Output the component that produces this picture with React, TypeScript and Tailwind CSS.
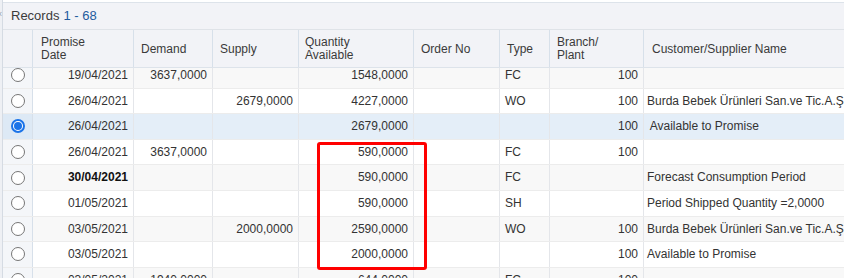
import React from 'react';

type Row = {
  date: string;
  demand?: string;
  supply?: string;
  qty: string;
  type?: string;
  branch?: string;
  name?: string;
  bold?: boolean;
  selected?: boolean;
};

const rows: Row[] = [
  { date: '19/04/2021', demand: '3637,0000', qty: '1548,0000', type: 'FC', branch: '100' },
  { date: '26/04/2021', supply: '2679,0000', qty: '4227,0000', type: 'WO', branch: '100', name: 'Burda Bebek Ürünleri San.ve Tic.A.Ş' },
  { date: '26/04/2021', qty: '2679,0000', branch: '100', name: ' Available to Promise', selected: true },
  { date: '26/04/2021', demand: '3637,0000', qty: '590,0000', type: 'FC', branch: '100' },
  { date: '30/04/2021', qty: '590,0000', type: 'FC', name: 'Forecast Consumption Period', bold: true },
  { date: '01/05/2021', qty: '590,0000', type: 'SH', name: 'Period Shipped Quantity =2,0000' },
  { date: '03/05/2021', supply: '2000,0000', qty: '2590,0000', type: 'WO', branch: '100', name: 'Burda Bebek Ürünleri San.ve Tic.A.Ş' },
  { date: '03/05/2021', qty: '2000,0000', branch: '100', name: 'Available to Promise' },
  { date: '03/05/2021', demand: '1940,0000', qty: '644,0000', type: 'FC', branch: '100' },
];

const cols = 'grid grid-cols-[30px_101px_79px_86px_115px_86px_50px_94px_1fr]';
const cell = 'border-r border-[#e4e6ea] px-[5px] overflow-hidden whitespace-nowrap';

const Radio = ({ on }: { on?: boolean }) =>
  on ? (
    <span className="w-[14px] h-[14px] rounded-full border-2 border-[#1a73e8] flex items-center justify-center bg-white">
      <span className="w-[8px] h-[8px] rounded-full bg-[#1a73e8]" />
    </span>
  ) : (
    <span className="w-[14px] h-[14px] rounded-full border border-[#767676] bg-white" />
  );

export default function App() {
  return (
    <div
      className="w-[844px] h-[278px] overflow-hidden bg-white flex text-[12px] text-[#333]"
      style={{ fontFamily: '"Liberation Sans", Arial, sans-serif' }}
    >
      <div className="w-[3px] border-r border-[#d5dbe3] bg-[#eef0f4] pt-[10px]">
        <span className="block text-[9px] leading-none text-[#9aa3ad] -ml-[3px]">×</span>
      </div>
      <div className="flex-1 relative border-t border-[#dde3ea] mt-[2px]">
        <div className="h-[27px] bg-[#f2f3f7] border-b border-[#dfe3e8] flex items-center pl-[8px] text-[13px]">
          <span className="text-[#3b3b3b]">Records</span>
          <span className="ml-[4px] text-[#1f5c9e]">1 - 68</span>
        </div>
        <div className={`${cols} h-[38px] bg-[#f2f3f7] border-b border-[#dde3ea] items-stretch text-[#3a3a3a]`}>
          <div className="border-r border-[#d7e0ea]" />
          <div className="border-r border-[#d7e0ea] px-[8px] flex items-center leading-[13px]">Promise<br />Date</div>
          <div className="border-r border-[#d7e0ea] px-[7px] flex items-center">Demand</div>
          <div className="border-r border-[#d7e0ea] px-[7px] flex items-center">Supply</div>
          <div className="border-r border-[#d7e0ea] px-[6px] flex items-center leading-[13px]">Quantity<br />Available</div>
          <div className="border-r border-[#d7e0ea] px-[7px] flex items-center">Order No</div>
          <div className="border-r border-[#d7e0ea] px-[7px] flex items-center">Type</div>
          <div className="border-r border-[#d7e0ea] px-[7px] flex items-center leading-[13px]">Branch/<br />Plant</div>
          <div className="px-[8px] flex items-center">Customer/Supplier Name</div>
        </div>
        <div className="h-[210px] overflow-hidden relative">
          <div className="-mt-[5px]">
            {rows.map((r, i) => (
              <div
                key={i}
                className={`${cols} h-[25.6px] leading-[25px] border-b border-[#ececec] ${
                  r.selected ? 'bg-[#e4eef8]' : i % 2 === 0 ? 'bg-[#f8f8f8]' : 'bg-white'
                }`}
              >
                <div className={`border-r border-[#d7e0ea] flex items-center justify-center ${r.selected ? 'bg-[#dde9f5]' : 'bg-[#f4f6f9]'}`}>
                  <Radio on={r.selected} />
                </div>
                <div className={`${cell} text-right ${r.bold ? 'font-bold text-[#111]' : ''}`}>{r.date}</div>
                <div className={`${cell} text-right`}>{r.demand}</div>
                <div className={`${cell} text-right`}>{r.supply}</div>
                <div className={`${cell} text-right`}>{r.qty}</div>
                <div className={cell} />
                <div className={cell}>{r.type}</div>
                <div className={`${cell} text-right`}>{r.branch}</div>
                <div className="px-[3px] overflow-hidden whitespace-pre">{r.name}</div>
              </div>
            ))}
          </div>
          <div className="absolute left-[314px] top-[74px] w-[110px] h-[128px] border-[3px] border-[#ff0000] rounded-[3px]" />
        </div>
      </div>
    </div>
  );
}
